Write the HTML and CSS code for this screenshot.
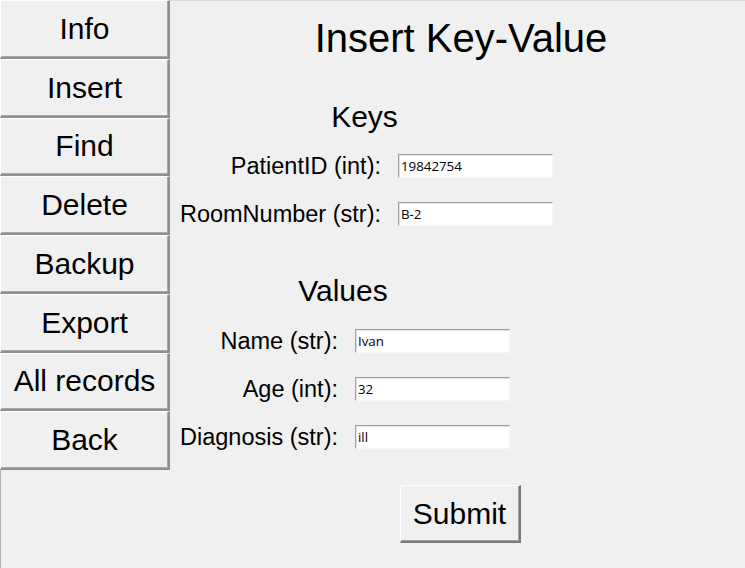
FILE: index.html
```html
<!DOCTYPE html>
<html>
<head>
<meta charset="utf-8">
<link rel="stylesheet" href="styles.css">
</head>
<body>
<div class="app">
  <div class="sidebar">
    <button class="nav-btn">Info</button>
    <button class="nav-btn">Insert</button>
    <button class="nav-btn">Find</button>
    <button class="nav-btn">Delete</button>
    <button class="nav-btn">Backup</button>
    <button class="nav-btn">Export</button>
    <button class="nav-btn">All records</button>
    <button class="nav-btn">Back</button>
    <div class="sidebar-fill"></div>
  </div>
  <div class="main">
    <div class="title">Insert Key-Value</div>
    <div class="form keys">
      <div class="heading">Keys</div>
      <label class="label">PatientID (int):</label>
      <input class="entry" type="text" value="19842754">
      <label class="label">RoomNumber (str):</label>
      <input class="entry" type="text" value="B-2">
    </div>
    <div class="form values">
      <div class="heading heading-values">Values</div>
      <label class="label">Name (str):</label>
      <input class="entry" type="text" value="Ivan">
      <label class="label">Age (int):</label>
      <input class="entry" type="text" value="32">
      <label class="label">Diagnosis (str):</label>
      <input class="entry" type="text" value="ill">
    </div>
    <button class="submit">Submit</button>
  </div>
</div>
</body>
</html>
```

FILE: styles.css
```css
html, body {
  margin: 0;
  padding: 0;
  background: #f0f0f0;
}
body {
  width: 745px;
  height: 568px;
  overflow: hidden;
  font-family: "Liberation Sans", Arial, sans-serif;
  color: #000;
}
.app {
  display: flex;
  height: 568px;
}
.sidebar {
  width: 170px;
  flex: 0 0 170px;
  display: flex;
  flex-direction: column;
}
.nav-btn {
  height: 58.75px;
  flex: 0 0 58.75px;
  box-sizing: border-box;
  margin: 0;
  padding: 0;
  background: #f0f0f0;
  font-family: "Liberation Sans", Arial, sans-serif;
  font-size: 30px;
  color: #000;
  border-style: solid;
  border-width: 1px 2px 2px 1px;
  border-color: #ffffff #8f8f8f #8f8f8f #ffffff;
  box-shadow: inset -1px -1px 0 #a8a8a8;
}
.sidebar-fill {
  flex: 1;
  border-left: 1px solid #b4b4b4;
}
.main {
  flex: 1;
  display: flex;
  flex-direction: column;
  align-items: center;
  padding-left: 5px;
  border-top: 1px solid #dadada;
}
.title {
  height: 74px;
  display: flex;
  align-items: center;
  font-size: 40px;
  margin-left: 2px;
}
.form {
  align-self: flex-start;
  margin-left: 6px;
  display: grid;
  column-gap: 17px;
  grid-auto-rows: 48px;
  align-items: center;
}
.keys {
  margin-top: 17px;
  grid-template-columns: 200px 155px;
  grid-template-rows: 50px;
}
.values {
  margin-top: 27px;
  grid-template-columns: 157px 155px;
  grid-template-rows: 52px;
}
.heading {
  grid-column: 1 / -1;
  justify-self: center;
  font-size: 30px;
  margin-left: -5px;
}
.label {
  justify-self: end;
  font-size: 23.5px;
  white-space: nowrap;
}
.entry {
  box-sizing: border-box;
  width: 155px;
  height: 24px;
  margin: 0;
  padding: 0 2px;
  background: #fff;
  border-style: solid;
  border-width: 1px;
  border-color: #a0a0a0 #f7f7f7 #f7f7f7 #a0a0a0;
  box-shadow: inset 1px 1px 0 #e3e3e3;
  font-family: "Open Sans", "DejaVu Sans", sans-serif;
  font-size: 13.3px;
  color: #000;
  outline: none;
}
.submit {
  margin-top: 24px;
  width: 121px;
  height: 58px;
  box-sizing: border-box;
  padding: 0;
  background: #f0f0f0;
  font-family: "Liberation Sans", Arial, sans-serif;
  font-size: 30px;
  color: #000;
  border-style: solid;
  border-width: 1px 2px 2px 1px;
  border-color: #ffffff #7a7a7a #7a7a7a #ffffff;
  box-shadow: inset -1px -1px 0 #a0a0a0;
}
```
